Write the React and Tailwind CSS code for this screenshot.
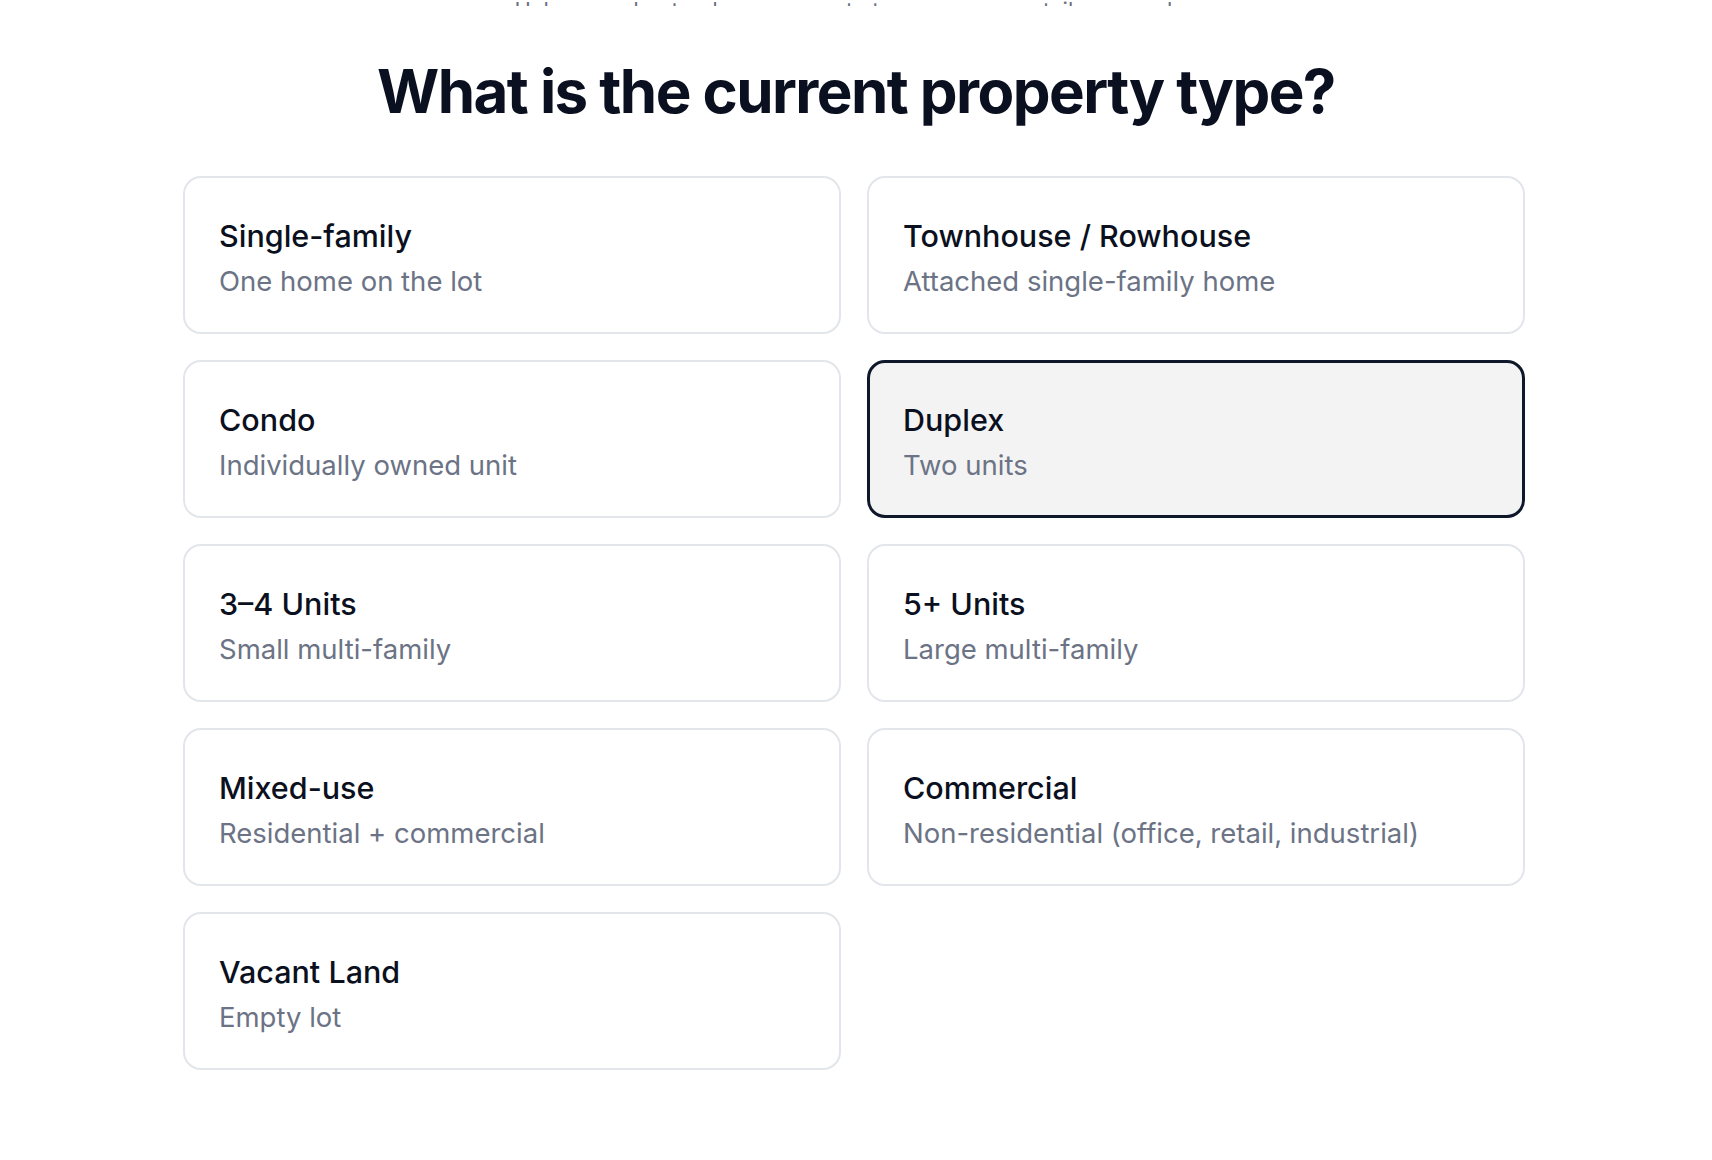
export default function App() {
  const items = [
    { t: "Single-family", s: "One home on the lot" },
    { t: "Townhouse / Rowhouse", s: "Attached single-family home" },
    { t: "Condo", s: "Individually owned unit" },
    { t: "Duplex", s: "Two units", selected: true },
    { t: "3–4 Units", s: "Small multi-family" },
    { t: "5+ Units", s: "Large multi-family" },
    { t: "Mixed-use", s: "Residential + commercial" },
    { t: "Commercial", s: "Non-residential (office, retail, industrial)" },
    { t: "Vacant Land", s: "Empty lot" },
  ];
  return (
    <div className="min-h-screen w-full bg-white font-['Inter',sans-serif] overflow-hidden">
      <div className="h-[6px] overflow-hidden flex justify-center items-end">
        <p className="text-[22px] leading-[30px] text-gray-500 translate-y-[19px] whitespace-nowrap">
          Help us understand your property type, so we can tailor your plan
        </p>
      </div>
      <h1 className="mt-[55px] text-center text-[60px] leading-[60px] font-bold tracking-[-0.026em] text-[#0b1020]">
        What is the current property type?
      </h1>
      <div className="mt-[55px] ml-[183px] w-[1342px] grid grid-cols-2 gap-[26px]">
        {items.map((it) => (
          <div
            key={it.t}
            className={
              it.selected
                ? "h-[158px] rounded-[18px] border-[3px] border-[#0f172a] bg-[#f3f3f4] pl-[33px] pr-6 pt-[7px] flex flex-col justify-center"
                : "h-[158px] rounded-[18px] border-2 border-[#e2e5ea] bg-white pl-[34px] pr-6 pt-[7px] flex flex-col justify-center"
            }
          >
            <div className="text-[30.5px] leading-[40px] font-medium text-[#0b1020]">{it.t}</div>
            <div className="mt-[5px] text-[27.5px] leading-[40px] text-[#6b7385]">{it.s}</div>
          </div>
        ))}
      </div>
    </div>
  );
}
